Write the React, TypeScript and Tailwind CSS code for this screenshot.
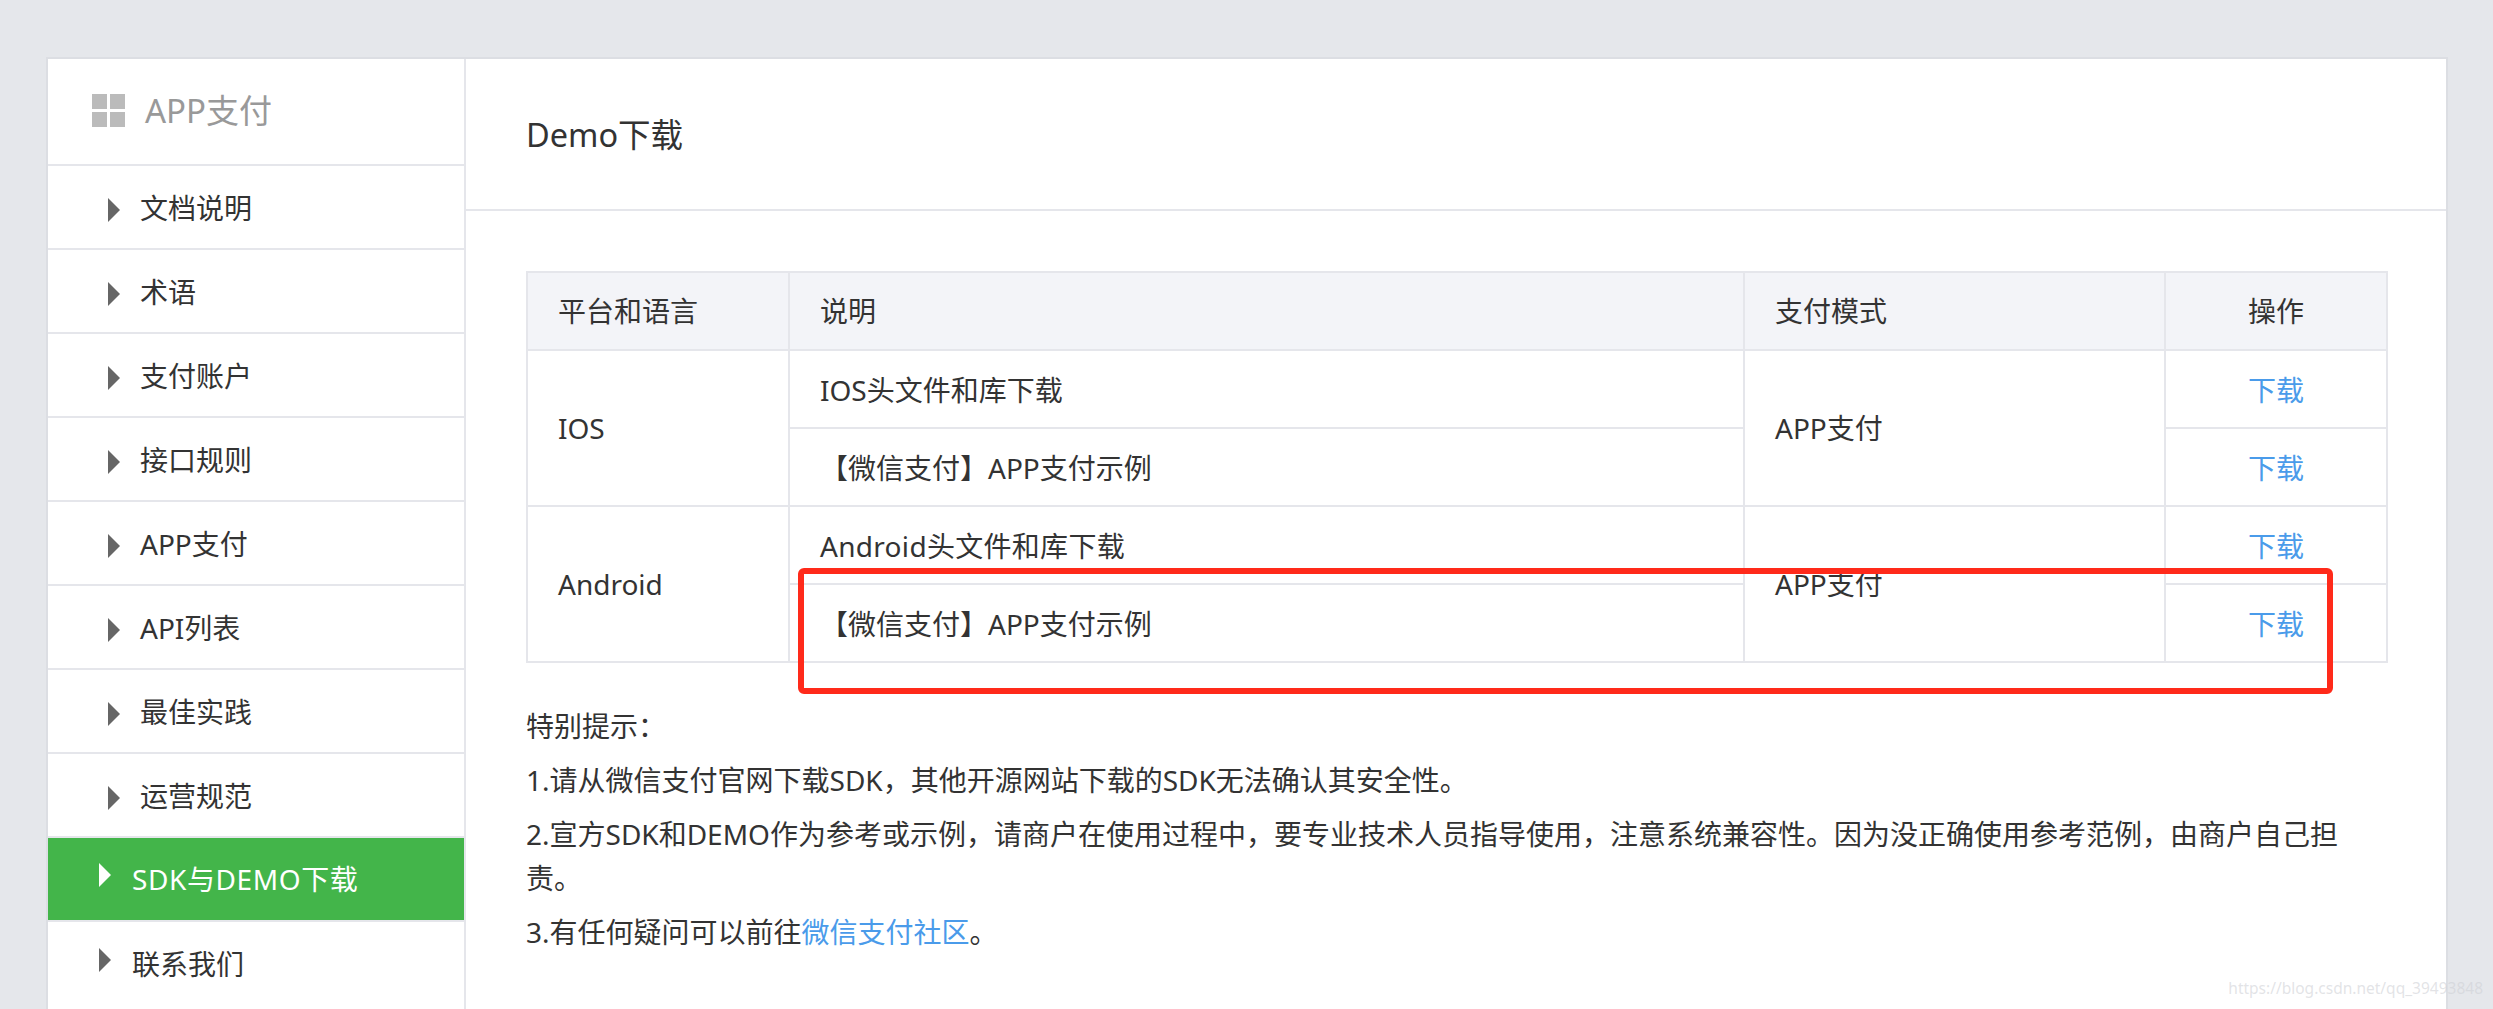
const menu = ["文档说明", "术语", "支付账户", "接口规则", "APP支付", "API列表", "最佳实践", "运营规范"]

function Arrow({ white, lifted }: { white?: boolean; lifted?: boolean }) {
    return (
        <span
            className={`w-0 h-0 border-y-[12px] border-l-[12px] border-y-transparent ${white ? "border-l-white" : "border-l-[#666666]"} ${lifted ? "mb-2" : "mt-[5px]"}`}
        />
    )
}

function Sidebar() {
    return (
        <aside className="w-[418px] shrink-0 border-r-2 border-[#e5e6eb]">
            <div className="flex items-center h-[107px] pl-[44px] gap-[20px] pb-[2px] border-b-2 border-[#e5e6eb] text-[33px] text-[#999999]">
                <div className="grid grid-cols-[15px_15px] grid-rows-[15px_15px] gap-[3px]">
                    <span className="bg-[#bbbbbb]" />
                    <span className="bg-[#bbbbbb]" />
                    <span className="bg-[#bbbbbb]" />
                    <span className="bg-[#bbbbbb]" />
                </div>
                <span>APP支付</span>
            </div>
            {menu.map((item) => (
                <div key={item} className="flex items-center h-[84px] pl-[60px] gap-[20px] border-b-2 border-[#e5e6eb] text-[28px] text-[#333333]">
                    <Arrow />
                    <span className="pt-[1px]">{item}</span>
                </div>
            ))}
            <div className="flex items-center h-[84px] pl-[51px] gap-[21px] border-b-2 border-[#e5e6eb] bg-[#43b54a] text-[28px] text-white">
                <Arrow white lifted />
                <span className="tracking-[0.6px]">SDK与DEMO下载</span>
            </div>
            <div className="flex items-center h-[84px] pl-[51px] gap-[21px] text-[28px] text-[#333333]">
                <Arrow lifted />
                <span>联系我们</span>
            </div>
        </aside>
    )
}

function DownloadTable() {
    const cell = "border-2 border-[#e5e6eb] px-[30px] font-normal text-left"
    const desc = "border-2 border-[#e5e6eb] px-[30px] pt-[2px] text-left"
    const link = "border-2 border-[#e5e6eb] pt-[2px] text-center text-[#4a9bea]"
    return (
        <div className="relative">
            <table className="w-[1860px] table-fixed border-collapse text-[28px] text-[#333333]">
                <colgroup>
                    <col className="w-[262px]" />
                    <col className="w-[955px]" />
                    <col className="w-[421px]" />
                    <col className="w-[222px]" />
                </colgroup>
                <thead>
                    <tr className="h-[78px] bg-[#f3f4f8]">
                        <th className={cell}>平台和语言</th>
                        <th className={cell}>说明</th>
                        <th className={cell}>支付模式</th>
                        <th className="border-2 border-[#e5e6eb] font-normal text-center">操作</th>
                    </tr>
                </thead>
                <tbody>
                    <tr className="h-[78px]">
                        <td rowSpan={2} className={cell}>IOS</td>
                        <td className={desc}>IOS头文件和库下载</td>
                        <td rowSpan={2} className={cell}>APP支付</td>
                        <td className={link}>下载</td>
                    </tr>
                    <tr className="h-[78px]">
                        <td className={desc}>【微信支付】APP支付示例</td>
                        <td className={link}>下载</td>
                    </tr>
                    <tr className="h-[78px]">
                        <td rowSpan={2} className={cell}>Android</td>
                        <td className={desc}><span className="tracking-[0.3px]">Android头文件和库下载</span></td>
                        <td rowSpan={2} className={cell}>APP支付</td>
                        <td className={link}>下载</td>
                    </tr>
                    <tr className="h-[78px]">
                        <td className={desc}>【微信支付】APP支付示例</td>
                        <td className={link}>下载</td>
                    </tr>
                </tbody>
            </table>
            {/* red annotation drawn over the screenshot */}
            <div className="absolute left-[272px] top-[297px] w-[1535px] h-[126px] border-[6px] border-[#ff2a1a] rounded-md" />
        </div>
    )
}

export default function App() {
    return (
        <div className="relative h-screen overflow-hidden bg-[#e5e7eb] pt-[57px] pl-[46px] pr-[45px] font-['Noto_Sans','Noto_Sans_CJK_SC',sans-serif]">
            <div className="flex min-h-[1000px] bg-white border-2 border-[#dcdee3]">
                <Sidebar />
                <main className="flex-1">
                    <div className="flex items-center h-[152px] pl-[60px] pt-[2px] border-b-2 border-[#e5e6eb] text-[32.5px] text-[#333333]">
                        Demo下载
                    </div>
                    <div className="pt-[60px] pl-[60px]">
                        <DownloadTable />
                        <div className="w-[1860px] mt-[41px] text-[28px] leading-[44px] text-[#333333] space-y-[10px]">
                            <p>特别提示：</p>
                            <p>1.请从微信支付官网下载SDK，其他开源网站下载的SDK无法确认其安全性。</p>
                            <p>2.宣方SDK和DEMO作为参考或示例，请商户在使用过程中，要专业技术人员指导使用，注意系统兼容性。因为没正确使用参考范例，由商户自己担责。</p>
                            <p>3.有任何疑问可以前往<span className="text-[#4a9bea]">微信支付社区</span>。</p>
                        </div>
                    </div>
                </main>
            </div>
            <div className="absolute right-[10px] bottom-[9px] text-[15.5px] text-[#cfd1d6]/60">https://blog.csdn.net/qq_39493848</div>
        </div>
    )
}
